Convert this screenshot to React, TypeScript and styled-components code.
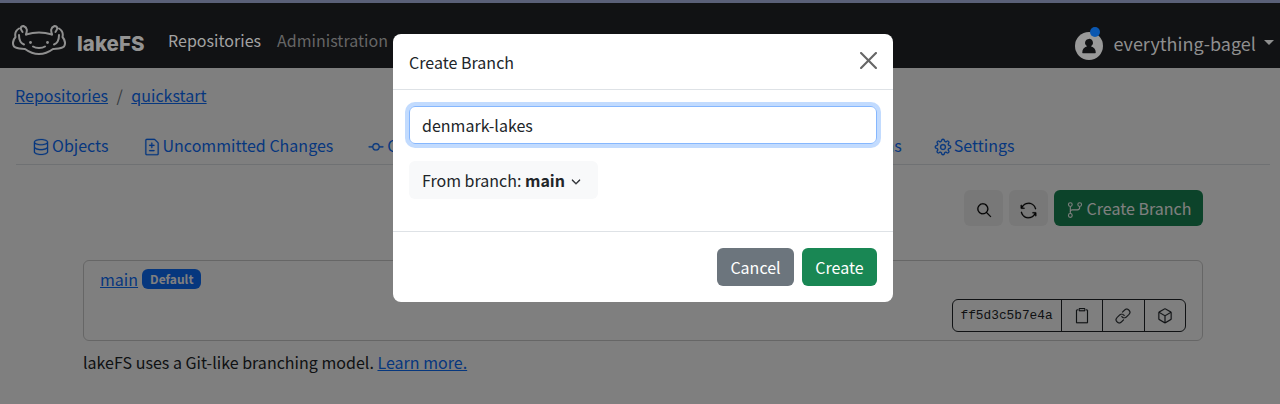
import React from "react";
import styled, { createGlobalStyle } from "styled-components";
import { GoDatabase, GoFileDiff, GoGitCommit, GoGitBranch, GoTag, GoGitCompare, GoPlay, GoGear, GoSearch, GoSync, GoPaste, GoLink, GoPackage, GoChevronDown, GoPersonFill } from "react-icons/go";

const Global = createGlobalStyle`
  html, body { margin: 0; padding: 0; background: #fff; }
  body { font-family: "Noto Sans CJK SC", "Noto Sans", sans-serif; font-size: 16px; line-height: 24px; color: #212529; letter-spacing: .02px; }
  * { box-sizing: border-box; }
`;
const Page = styled.div`
  position: relative; width: 1280px; height: 404px; overflow: hidden;
  display: flex; flex-direction: column;
`;
const Strip = styled.div`height: 3px; background: #5a6078; flex: none;`;
const Navbar = styled.nav`
  height: 65px; flex: none; background: #111214; display: flex; align-items: center;
  padding: 8px 6px 0 12px; color: #999;
`;
const Brand = styled.div`display: flex; align-items: center; gap: 11px; width: 156px;`;
const BrandText = styled.span`font-family: Inter, sans-serif; font-weight: 800; font-size: 20.5px; color: #939393; margin-top: 8px;`;
const NavLink = styled.span<{ $muted?: boolean }>`
  font-size: 16px; margin-right: 16px; color: ${p => (p.$muted ? "#666" : "#a3a3a3")};
`;
const NavRight = styled.div`margin-left: auto; margin-top: 6px; display: flex; align-items: center;`;
const Avatar = styled.span`
  position: relative; width: 28px; height: 28px; border-radius: 50%; background: #999; margin-top: 6px;
  display: flex; align-items: center; justify-content: center; color: #111214; margin-right: 10px;
  &::after {
    content: ""; position: absolute; top: -5px; right: 3px; width: 10px; height: 10px;
    border-radius: 50%; background: #0b57b0;
  }
`;
const UserName = styled.span`font-size: 18px; color: #8f8f8f; margin-right: 8px;`;
const Caret = styled.span`
  width: 0; height: 0; border-top: 5px solid #8f8f8f; border-left: 5px solid transparent; border-right: 5px solid transparent;
`;
const Content = styled.main`
  position: relative; flex: 1; padding: 15px 10px 0 15px; min-height: 0;
  &::after { content: ""; position: absolute; inset: 0; background: rgba(0,0,0,.5); }
`;
const Crumbs = styled.div`display: flex; align-items: center; height: 24px; color: #6c757d;`;
const A = styled.a`color: #0d6efd; text-decoration: underline; cursor: pointer;`;
const Sep = styled.span`margin: 0 8.500px;`;
const Tabs = styled.div`
  display: flex; margin-top: 22px; margin-left: 1px; padding-bottom: 4px; border-bottom: 1px solid #dee2e6; height: 36px; align-items: center;
`;
const Tab = styled.a<{ $l: number; $r: number }>`
  display: flex; align-items: center; gap: 2px; padding: 0 ${p => p.$r}px 0 ${p => p.$l}px; color: #0d6efd; white-space: nowrap;
  svg { margin-top: 4px; stroke: currentColor; stroke-width: .3; }
`;
const Actions = styled.div`
  display: flex; justify-content: flex-end; gap: 6px; margin-top: 25px; padding-right: 67px;
`;
const IconBtn = styled.button`
  width: 39px; height: 36px; border: 0; border-radius: 6px; background: #f1f1f1; color: #000;
  display: flex; align-items: center; justify-content: center; padding: 4px 0 0;
  svg { stroke: currentColor; stroke-width: .4; }
`;
const PrimaryBtn = styled.button`
  height: 36px; width: 149px; border: 0; border-radius: 6px; background: #198754; color: #fff; font: inherit;
  display: flex; align-items: center; justify-content: center; gap: 3px; padding: 0;
  svg { margin-top: 3px; }
`;
const Card = styled.section`
  margin: 34px 67px 0 68px; height: 81px; border: 1px solid #ccc; border-radius: 6px;
  padding: 6px 16px; display: flex; flex-direction: column;
`;
const CardTop = styled.div`display: flex; align-items: center; gap: 4px;`;
const Badge = styled.span`
  background: #0d6efd; color: #fff; font-size: 12px; font-weight: 700; line-height: 20px; height: 20px;
  border-radius: 6px; padding: 0 8px;
`;
const RefGroup = styled.div`
  align-self: flex-end; display: flex; height: 33px; border: 1px solid #212529; border-radius: 6px;
  margin-top: 8px;
`;
const Hash = styled.span`
  font-family: "Liberation Mono", monospace; font-size: 12.8px; line-height: 31px; padding: 0 8px; width: 108px; letter-spacing: 0;
`;
const RefBtn = styled.span`
  width: 41.5px; display: flex; align-items: center; justify-content: center; border-left: 1px solid #212529; color: #212529;
  svg { stroke: currentColor; stroke-width: .25; }
`;
const Note = styled.p`margin: 9px 0 0 68px;`;
const ModalLayer = styled.div`
  position: absolute; inset: 0; display: flex; justify-content: center; padding: 34px 0 0 6px; z-index: 5;
`;
const Modal = styled.div`
  width: 500px; height: 268px; background: #fff; border-radius: 8px; display: flex; flex-direction: column;
`;
const ModalHeader = styled.header`
  height: 56px; padding: 0 16px; display: flex; align-items: center; justify-content: space-between;
  border-bottom: 1px solid #dee2e6; flex: none;
`;
const Title = styled.h5`margin: 0; font-size: 16px; font-weight: 400;`;
const Close = styled.button`
  width: 17px; height: 17px; padding: 0; border: 0; background: none; color: #666; display: block; margin-top: -2px;
  svg { display: block; }
`;
const ModalBody = styled.div`padding: 16px; flex: 1;`;
const Input = styled.div`
  height: 38px; border: 1px solid #86b7fe; border-radius: 6px; padding: 0 12px; line-height: 36px;
  box-shadow: 0 0 0 4px rgba(13,110,253,.25);
`;
const Dropdown = styled.button`
  margin-top: 17px; height: 38px; width: 189px; border: 0; border-radius: 6px; background: #f8f9fa; font: inherit; color: #212529;
  display: flex; align-items: center; padding: 0 13px; gap: 4px; white-space: nowrap;
  b { font-weight: 700; }
  svg { margin-top: 4px; stroke: currentColor; stroke-width: 1; }
`;
const ModalFooter = styled.footer`
  height: 71px; flex: none; border-top: 1px solid #dee2e6; display: flex; justify-content: flex-end; gap: 8px; padding: 16px;
`;
const Btn = styled.button<{ $green?: boolean; $w: number }>`
  height: 38px; width: ${p => p.$w}px; border: 0; border-radius: 6px; color: #fff; font: inherit; padding: 0;
  background: ${p => (p.$green ? "#198754" : "#6c757d")};
`;
const Logo = () => (
  <svg width="54" height="30" viewBox="0 0 54 30" fill="none" stroke="#8f8f8f" strokeWidth="2" strokeLinecap="round" strokeLinejoin="round">
    <path d="M14 9.500C19 8 23 7.500 27 7.500S35 8 40 9.500" />
    <path d="M14 9.500C15 6 16 3 11.500 1C7 1.500 9 5 10.500 7" />
    <path d="M40 9.500C39 6 38 3 42.500 1C47 1.500 45 5 43.500 7" />
    <path d="M7 3.500C3 6 3 10 3.500 12C1 15 .5 19 2 21.500C5 24 9 23.500 13 24C17 27 22 29 27 29S37 27 41 24C45 23.500 49 24 52 21.500C53.500 19 53 15 50.500 12C51 10 51 6 47 3.500" />
    <path d="M7 10C7 14 8 18 12 19.500" />
    <path d="M47 10C47 14 46 18 42 19.500" />
    <path d="M21 21.500C24 23.500 30 23.500 33 21.500" />
    <circle cx="18.500" cy="17.500" r="1.400" fill="#8f8f8f" stroke="none" />
    <circle cx="35.500" cy="17.500" r="1.400" fill="#8f8f8f" stroke="none" />
  </svg>
);
const tabs = [
  { t: "Objects", i: <GoDatabase size={18} />, l: 16, r: 18 },
  { t: "Uncommitted Changes", i: <GoFileDiff size={18} />, l: 16, r: 16 },
  { t: "Commits", i: <GoGitCommit size={18} />, l: 18, r: 17 },
  { t: "Branches", i: <GoGitBranch size={18} />, l: 18, r: 17 },
  { t: "Tags", i: <GoTag size={18} />, l: 18, r: 17 },
  { t: "Compare", i: <GoGitCompare size={18} />, l: 18, r: 17 },
  { t: "Actions", i: <GoPlay size={18} />, l: 18, r: 17 },
  { t: "Settings", i: <GoGear size={18} />, l: 15, r: 16 },
];
export default function App() {
  return (
    <Page>
      <Global />
      <Strip />
      <Navbar>
        <Brand><Logo /><BrandText>lakeFS</BrandText></Brand>
        <NavLink>Repositories</NavLink>
        <NavLink $muted>Administration</NavLink>
        <NavRight>
          <Avatar><GoPersonFill size={18} /></Avatar>
          <UserName>everything-bagel</UserName>
          <Caret />
        </NavRight>
      </Navbar>
      <Content>
        <Crumbs><A>Repositories</A><Sep>/</Sep><A>quickstart</A></Crumbs>
        <Tabs>{tabs.map(t => <Tab key={t.t} $l={t.l} $r={t.r}>{t.i}{t.t}</Tab>)}</Tabs>
        <Actions>
          <IconBtn><GoSearch size={16} /></IconBtn>
          <IconBtn><GoSync size={17} /></IconBtn>
          <PrimaryBtn><GoGitBranch size={18} />Create Branch</PrimaryBtn>
        </Actions>
        <Card>
          <CardTop><A>main</A><Badge>Default</Badge></CardTop>
          <RefGroup>
            <Hash>ff5d3c5b7e4a</Hash>
            <RefBtn><GoPaste size={16} /></RefBtn>
            <RefBtn><GoLink size={16} /></RefBtn>
            <RefBtn><GoPackage size={16} /></RefBtn>
          </RefGroup>
        </Card>
        <Note>lakeFS uses a Git-like branching model. <A>Learn more.</A></Note>
      </Content>
      <ModalLayer>
        <Modal>
          <ModalHeader>
            <Title>Create Branch</Title>
            <Close aria-label="Close">
              <svg viewBox="0 0 16 16" width="17" height="17" fill="currentColor"><path d="M.293.293a1 1 0 0 1 1.414 0L8 6.586 14.293.293a1 1 0 1 1 1.414 1.414L9.414 8l6.293 6.293a1 1 0 0 1-1.414 1.414L8 9.414l-6.293 6.293a1 1 0 0 1-1.414-1.414L6.586 8 .293 1.707a1 1 0 0 1 0-1.414z" /></svg>
            </Close>
          </ModalHeader>
          <ModalBody>
            <Input>denmark-lakes</Input>
            <Dropdown><span>From branch: <b>main</b></span><GoChevronDown size={14} /></Dropdown>
          </ModalBody>
          <ModalFooter>
            <Btn $w={77}>Cancel</Btn>
            <Btn $green $w={75}>Create</Btn>
          </ModalFooter>
        </Modal>
      </ModalLayer>
    </Page>
  );
}
